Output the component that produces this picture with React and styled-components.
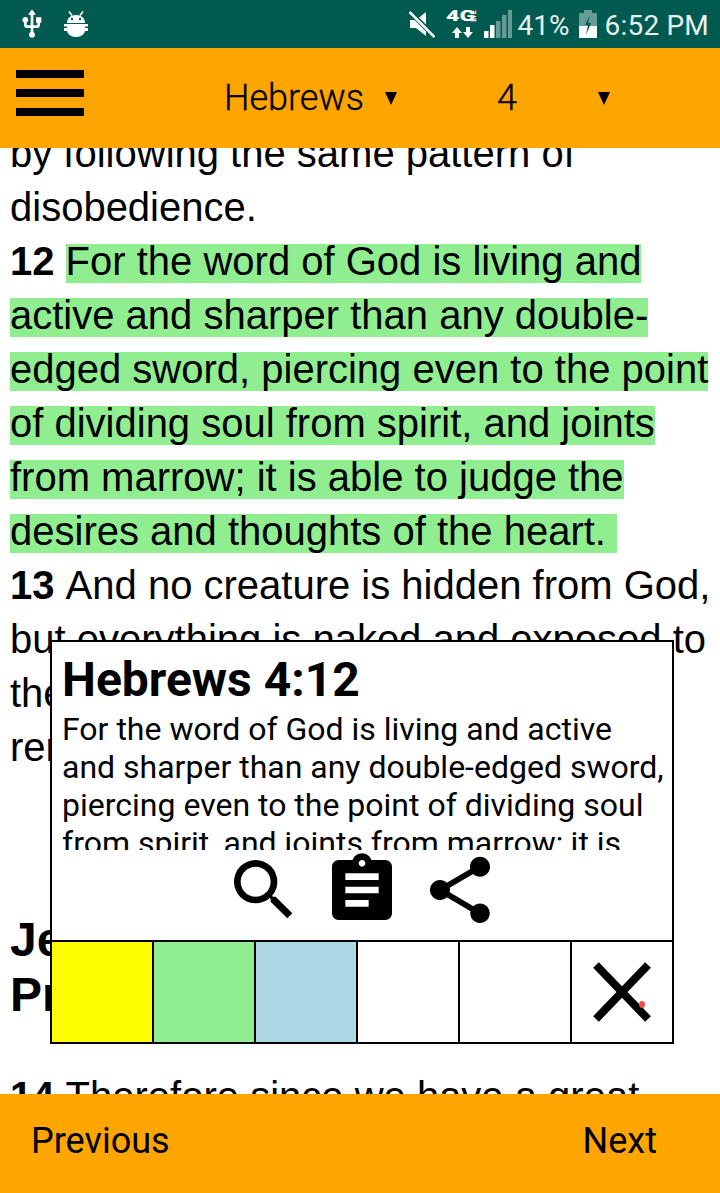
import React from 'react';
import styled, { createGlobalStyle } from 'styled-components';
import { MdUsb, MdSearch, MdAssignment, MdShare } from 'react-icons/md';

const GlobalStyle = createGlobalStyle`
  html, body {
    margin: 0;
    padding: 0;
    background: #fff;
  }
`

const Screen = styled.div`
  position: relative;
  display: flex;
  flex-direction: column;
  width: 720px;
  height: 1193px;
  overflow: hidden;
  font-family: Roboto, sans-serif;
  color: #000;
`

const StatusBar = styled.div`
  display: flex;
  align-items: center;
  flex: 0 0 48px;
  height: 48px;
  background: #005a4f;
  color: #fff;
  padding: 0 11px 0 16px;
  box-sizing: border-box;
`

const StatusIcon = styled.span`
  display: flex;
  margin-left: ${props => props.gap || 0}px;
  svg { display: block; }
`

const StatusSpacer = styled.div`
  flex: 1;
`

const StatusText = styled.span`
  font-size: ${props => props.size}px;
  letter-spacing: ${props => props.spacing || 0}px;
  margin-left: ${props => props.gap || 0}px;
  padding-top: 3px;
  line-height: 45px;
  color: #e8f0ee;
`

const LteBlock = styled.div`
  position: relative;
  width: 34px;
  height: 30px;
  margin-left: 11px;
`

const LteLabel = styled.span`
  position: absolute;
  left: 0;
  top: 0;
  font-size: 15.5px;
  line-height: 14px;
  font-weight: 900;
  transform: scaleX(1.5);
  transform-origin: left center;
`

const LteSmall = styled.span`
  position: absolute;
  right: 0;
  top: 4px;
  font-size: 7px;
  line-height: 6px;
  font-weight: 700;
  transform: rotate(-90deg);
`

const LteArrows = styled.svg`
  position: absolute;
  left: 6px;
  top: 18px;
`

const Toolbar = styled.div`
  display: flex;
  align-items: center;
  flex: 0 0 100px;
  height: 100px;
  background: #ffa500;
  padding-left: 16px;
  box-sizing: border-box;
`

const Burger = styled.div`
  display: flex;
  flex-direction: column;
  gap: 11px;
  width: 68px;
  margin: 0 140px 10px 0;
`

const BurgerBar = styled.div`
  height: 8px;
  background: #000;
`

const Picker = styled.div`
  display: flex;
  align-items: center;
  width: ${props => props.width}px;
  font-size: 36px;
  font-weight: 300;
  -webkit-text-stroke: 0.3px #000;
`

const PickerLabel = styled.span`
  width: ${props => props.labelWidth}px;
`

const Caret = styled.span`
  width: 0;
  height: 0;
  margin-top: 1px;
  border-left: 6px solid transparent;
  border-right: 6px solid transparent;
  border-top: 13px solid #000;
`

const Reader = styled.div`
  flex: 1;
  overflow: hidden;
  font-family: "Liberation Sans", Arial, sans-serif;
  font-size: 40px;
  line-height: 54px;
`

const Passage = styled.div`
  margin-top: -22px;
  padding: 0 4px 0 10px;
`

const VerseNumber = styled.b`
  font-weight: 700;
`

// the band is a bit shorter than the font box, as on the device
const Highlight = styled.span`
  background: linear-gradient(transparent 5px, #90ee90 5px, #90ee90 45px, transparent 45px);
  -webkit-box-decoration-break: clone;
  box-decoration-break: clone;
`

const SectionTitle = styled.h2`
  margin: 138px 0 47px;
  font-size: 48px;
  line-height: 55px;
  font-weight: 700;
`

const BottomNav = styled.div`
  display: flex;
  align-items: center;
  justify-content: space-between;
  flex: 0 0 99px;
  height: 99px;
  padding: 0 63px 6px 31px;
  box-sizing: border-box;
  background: #ffa500;
  font-size: 36px;
  font-weight: 400;
`

const Popup = styled.div`
  position: absolute;
  left: 50px;
  top: 640px;
  width: 624px;
  height: 404px;
  box-sizing: border-box;
  border: 2px solid #000;
  background: #fff;
  display: flex;
  flex-direction: column;
`

const PopupTitle = styled.div`
  margin: 12px 0 0 10px;
  font-size: 48px;
  line-height: 52px;
  font-weight: 700;
`

const PopupBody = styled.div`
  height: 140px;
  margin: 4px 5px 0 10px;
  overflow: hidden;
  font-size: 32px;
  line-height: 38px;
`

const ActionRow = styled.div`
  display: flex;
  justify-content: center;
  gap: 18px;
  height: 90px;
  svg { display: block; }
`

const SwatchRow = styled.div`
  display: flex;
  flex: 1;
  border-top: 2px solid #000;
`

const Swatch = styled.div`
  position: relative;
  display: flex;
  align-items: center;
  justify-content: center;
  width: ${props => props.wide ? 110 : 100}px;
  background: ${props => props.color || '#fff'};
  border-right: ${props => props.last ? 'none' : '2px solid #000'};
`

const RedDot = styled.span`
  position: absolute;
  left: 67px;
  top: 59px;
  width: 6px;
  height: 7px;
  border-radius: 50%;
  background: #f44b4b;
`

const signalBars = [
  { x: 2, y: 22, lit: true },
  { x: 8, y: 16, lit: true },
  { x: 14, y: 12 },
  { x: 20, y: 6 },
  { x: 26, y: 1 },
]

const App = () => (
  <Screen>
    <GlobalStyle />
    <StatusBar>
      <StatusIcon><MdUsb size={32} /></StatusIcon>
      <StatusIcon gap={16}>
        <svg width="24" height="26" viewBox="0 0 24 26" fill="#fff">
          <path d="M5 0.5l3 4M19 0.5l-3 4" stroke="#fff" strokeWidth="1.6" fill="none" />
          <path d="M3 12c0-5 4-8 9-8s9 3 9 8z" />
          <circle cx="8" cy="8" r="1.2" fill="#005a4f" />
          <circle cx="16" cy="8" r="1.2" fill="#005a4f" />
          <rect x="0" y="13" width="24" height="2.5" />
          <rect x="3" y="15" width="18" height="2" />
          <rect x="0" y="17" width="24" height="3" />
          <path d="M3 20h18c-1 4-5 6-9 6s-8-2-9-6z" />
        </svg>
      </StatusIcon>
      <StatusSpacer />
      <StatusIcon>
        <svg width="26" height="28" viewBox="0 0 26 28" fill="#fff">
          <path d="M1 10h6l10-8v24L7 18H1z" />
          <path d="M0 1l26 26" stroke="#005a4f" strokeWidth="5" />
          <path d="M0.5 2l25 25" stroke="#fff" strokeWidth="2.5" />
        </svg>
      </StatusIcon>
      <LteBlock>
        <LteLabel>4G</LteLabel>
        <LteSmall>LTE</LteSmall>
        <LteArrows width="21" height="11" viewBox="0 0 21 11" fill="#fff">
          <path d="M5 0l5 6H7v5H3V6H0z" />
          <path d="M16 11l5-6h-3V0h-4v5h-3z" />
        </LteArrows>
      </LteBlock>
      <StatusIcon gap={2}>
        <svg width="30" height="30" viewBox="0 0 30 30">
          {signalBars.map(bar => (
            <rect key={bar.x} x={bar.x} y={bar.y} width="4.5" height={29 - bar.y} fill="#fff" fillOpacity={bar.lit ? 1 : 0.4} />
          ))}
        </svg>
      </StatusIcon>
      <StatusText size={28} gap={6}>41%</StatusText>
      <StatusIcon gap={9}>
        <svg width="18" height="30" viewBox="0 0 18 30">
          <path d="M5 1h8v3h5v14H0V4h5z" fill="#fff" fillOpacity="0.4" />
          <rect x="0" y="17" width="18" height="12" fill="#fff" />
          <path d="M11 6L6 16h3l-2 10 5-12H9z" fill="#005a4f" />
        </svg>
      </StatusIcon>
      <StatusText size={28} gap={8} spacing={0.2}>6:52 PM</StatusText>
    </StatusBar>
    <Toolbar>
      <Burger>
        <BurgerBar />
        <BurgerBar />
        <BurgerBar />
      </Burger>
      <Picker width={273}>
        <PickerLabel labelWidth={161}>Hebrews</PickerLabel>
        <Caret />
      </Picker>
      <Picker width={120}>
        <PickerLabel labelWidth={101}>4</PickerLabel>
        <Caret />
      </Picker>
    </Toolbar>
    <Reader>
      <Passage>
        by following the same pattern of disobedience.<br />
        <VerseNumber>12 </VerseNumber>
        <Highlight>For the word of God is living and active and sharper than any double-edged sword, piercing even to the point of dividing soul from spirit, and joints from marrow; it is able to judge the desires and thoughts of the heart.&nbsp;</Highlight><br />
        <VerseNumber>13 </VerseNumber>And no creature is hidden from God, but everything is naked and exposed to the eyes of him to whom we must render an account.
        <SectionTitle>Jesus the Great High<br />Priest</SectionTitle>
        <VerseNumber>14 </VerseNumber>Therefore since we have a great high priest who has passed through
      </Passage>
    </Reader>
    <BottomNav>
      <span>Previous</span>
      <span>Next</span>
    </BottomNav>
    <Popup>
      <PopupTitle>Hebrews 4:12</PopupTitle>
      <PopupBody>For the word of God is living and active and sharper than any double-edged sword, piercing even to the point of dividing soul from spirit, and joints from marrow; it is able to judge the desires and thoughts of the heart.</PopupBody>
      <ActionRow>
        <MdSearch size={80} />
        <MdAssignment size={80} />
        <MdShare size={80} />
      </ActionRow>
      <SwatchRow>
        <Swatch color="#ffff00" />
        <Swatch color="#90ee90" />
        <Swatch color="#add8e6" />
        <Swatch />
        <Swatch wide />
        <Swatch last>
          <svg width="60" height="60" viewBox="0 0 60 60">
            <path d="M4 3l52 54M56 3L4 57" stroke="#000" strokeWidth="8" fill="none" />
          </svg>
          <RedDot />
        </Swatch>
      </SwatchRow>
    </Popup>
  </Screen>
)

export default App
